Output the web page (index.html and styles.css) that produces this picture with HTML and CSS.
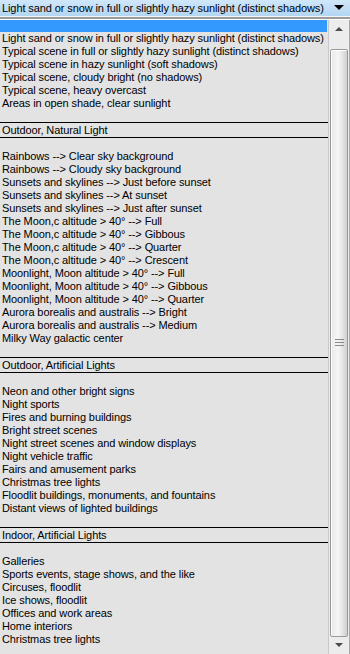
FILE: index.html
```html
<!DOCTYPE html>
<html lang="en">
<head>
  <meta charset="UTF-8">
  <meta name="viewport" content="width=device-width, initial-scale=1.0">
  <title>Lighting Condition</title>
  <link rel="stylesheet" href="styles.css">
</head>
<body>
  <div class="combo">
    <!-- Current value -->
    <div class="combo-value">
      <span class="combo-text">Light sand or snow in full or slightly hazy sunlight (distinct shadows)</span>
      <svg class="combo-arrow" width="10" height="6" viewBox="0 0 10 6"><polygon points="0,0 10,0 5,5" fill="#000"/></svg>
    </div>

    <!-- Open list -->
    <div class="dropdown">
      <div class="options">
        <div class="opt selected"></div>
        <div class="opt">Light sand or snow in full or slightly hazy sunlight (distinct shadows)</div>
        <div class="opt">Typical scene in full or slightly hazy sunlight (distinct shadows)</div>
        <div class="opt">Typical scene in hazy sunlight (soft shadows)</div>
        <div class="opt">Typical scene, cloudy bright (no shadows)</div>
        <div class="opt">Typical scene, heavy overcast</div>
        <div class="opt">Areas in open shade, clear sunlight</div>

        <div class="gap"></div>
        <div class="group">Outdoor, Natural Light</div>
        <div class="gap after"></div>
        <div class="opt">Rainbows --&gt; Clear sky background</div>
        <div class="opt">Rainbows --&gt; Cloudy sky background</div>
        <div class="opt">Sunsets and skylines --&gt; Just before sunset</div>
        <div class="opt">Sunsets and skylines --&gt; At sunset</div>
        <div class="opt">Sunsets and skylines --&gt; Just after sunset</div>
        <div class="opt">The Moon,c altitude &gt; 40° --&gt; Full</div>
        <div class="opt">The Moon,c altitude &gt; 40° --&gt; Gibbous</div>
        <div class="opt">The Moon,c altitude &gt; 40° --&gt; Quarter</div>
        <div class="opt">The Moon,c altitude &gt; 40° --&gt; Crescent</div>
        <div class="opt">Moonlight, Moon altitude &gt; 40° --&gt; Full</div>
        <div class="opt">Moonlight, Moon altitude &gt; 40° --&gt; Gibbous</div>
        <div class="opt">Moonlight, Moon altitude &gt; 40° --&gt; Quarter</div>
        <div class="opt">Aurora borealis and australis --&gt; Bright</div>
        <div class="opt">Aurora borealis and australis --&gt; Medium</div>
        <div class="opt">Milky Way galactic center</div>

        <div class="gap"></div>
        <div class="group">Outdoor, Artificial Lights</div>
        <div class="gap after"></div>
        <div class="opt">Neon and other bright signs</div>
        <div class="opt">Night sports</div>
        <div class="opt">Fires and burning buildings</div>
        <div class="opt">Bright street scenes</div>
        <div class="opt">Night street scenes and window displays</div>
        <div class="opt">Night vehicle traffic</div>
        <div class="opt">Fairs and amusement parks</div>
        <div class="opt">Christmas tree lights</div>
        <div class="opt">Floodlit buildings, monuments, and fountains</div>
        <div class="opt">Distant views of lighted buildings</div>

        <div class="gap"></div>
        <div class="group">Indoor, Artificial Lights</div>
        <div class="gap after"></div>
        <div class="opt">Galleries</div>
        <div class="opt">Sports events, stage shows, and the like</div>
        <div class="opt">Circuses, floodlit</div>
        <div class="opt">Ice shows, floodlit</div>
        <div class="opt">Offices and work areas</div>
        <div class="opt">Home interiors</div>
        <div class="opt">Christmas tree lights</div>
      </div>

      <!-- Scrollbar -->
      <div class="scrollbar">
        <div class="sb-btn">
          <svg width="8" height="5" viewBox="0 0 8 5"><polygon points="0,5 8,5 4,1" fill="#4a4a4a"/></svg>
        </div>
        <div class="sb-track">
          <div class="sb-thumb">
            <svg class="grip" width="9" height="8" viewBox="0 0 9 8">
              <rect x="0" y="0" width="9" height="1" fill="#8a8a8a"/>
              <rect x="0" y="3" width="9" height="1" fill="#8a8a8a"/>
              <rect x="0" y="6" width="9" height="1" fill="#8a8a8a"/>
            </svg>
          </div>
        </div>
        <div class="sb-btn">
          <svg width="8" height="5" viewBox="0 0 8 5"><polygon points="0,0 8,0 4,4" fill="#4a4a4a"/></svg>
        </div>
      </div>
    </div>
  </div>
</body>
</html>
```

FILE: styles.css
```css
/* Page */
body {
  margin: 0;
  width: 350px;
  height: 654px;
  overflow: hidden;
  background: #e3e3e3;
  font-family: "Liberation Sans", Arial, sans-serif;
  font-size: 11px;
  letter-spacing: -0.1px;
  color: #000;
}

.combo {
  display: flex;
  flex-direction: column;
  height: 654px;
}

/* Closed combo box value */
.combo-value {
  display: flex;
  align-items: center;
  justify-content: space-between;
  height: 16px;
  padding: 0 6px 0 2px;
  background: linear-gradient(#d0e7f9, #b2d6f3);
  border-bottom: 1px solid #f2f5f8;
  white-space: nowrap;
}

.combo-arrow {
  display: block;
}

/* Open list */
.dropdown {
  flex: 1;
  display: flex;
  border-top: 2px solid #9c9c9c;
  padding-top: 1px;
  background: #e3e3e3;
  box-shadow: inset 0 1px 0 #ffffff;
}

.options {
  flex: 1;
}

.opt {
  height: 13px;
  line-height: 13px;
  padding-left: 2px;
  white-space: nowrap;
}

.opt.selected {
  height: 12px;
  margin-right: 1px;
  background: #3399ff;
}

.gap {
  height: 12px;
}

.gap.after {
  height: 12px;
}

.group {
  height: 14px;
  line-height: 14px;
  padding-left: 2px;
  border-top: 1px solid #000;
  border-bottom: 1px solid #000;
}

/* Scrollbar */
.scrollbar {
  width: 20px;
  display: flex;
  flex-direction: column;
  border-left: 1px solid #c9c9c9;
  border-right: 1px solid #a8a8a8;
  background: #ececec;
}

.sb-btn {
  height: 17px;
  display: flex;
  align-items: center;
  justify-content: center;
}

.sb-track {
  flex: 1;
  display: flex;
  flex-direction: column;
  padding: 12px 1px 0;
}

.sb-thumb {
  flex: 1;
  display: flex;
  align-items: center;
  justify-content: center;
  border: 1px solid #9a9a9a;
  border-radius: 2px;
  background: linear-gradient(90deg, #e9e9e9, #f6f6f6 45%, #dedede 80%, #cfcfcf);
  box-shadow: inset 1px 1px 0 #ffffff;
}

.grip {
  display: block;
}
```
